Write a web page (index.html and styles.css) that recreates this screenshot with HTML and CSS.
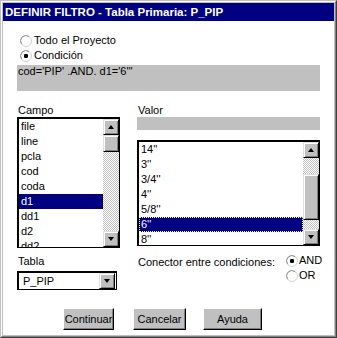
FILE: index.html
```html
<!DOCTYPE html>
<html>
<head>
<meta charset="utf-8">
<link rel="stylesheet" href="styles.css">
</head>
<body>
<div class="window">
  <div class="frame">
    <div class="titlebar">DEFINIR FILTRO - Tabla Primaria: P_PIP</div>
    <div class="client">
      <div class="radio-row"><svg class="radio" width="12" height="12" viewBox="0 0 12 12"><circle cx="6" cy="6" r="5.5" fill="#fff" stroke="#d0d0d0"/><path d="M1.6 9 A5.3 5.3 0 0 1 9 1.6" fill="none" stroke="#909090"/></svg><span>Todo el Proyecto</span></div>
      <div class="radio-row"><svg class="radio" width="12" height="12" viewBox="0 0 12 12"><circle cx="6" cy="6" r="5.5" fill="#fff" stroke="#d0d0d0"/><path d="M1.6 9 A5.3 5.3 0 0 1 9 1.6" fill="none" stroke="#909090"/><rect x="4" y="4" width="4" height="4" rx="1.2" fill="#000"/></svg><span>Condición</span></div>
      <div class="cond-field">cod='PIP' .AND. d1='6'''</div>

      <div class="lists">
        <div class="col campo">
          <div class="label">Campo</div>
          <div class="listbox campo-list">
            <ul class="items">
              <li>file</li><li>line</li><li>pcla</li><li>cod</li><li>coda</li>
              <li class="sel">d1</li><li>dd1</li><li>d2</li><li>dd2</li>
            </ul>
            <div class="scrollbar">
              <div class="sbtn"><span class="tri-up"></span></div>
              <div class="thumb thumb-campo"></div>
              <div class="track"></div>
              <div class="sbtn"><span class="tri-down"></span></div>
            </div>
          </div>
        </div>
        <div class="col valor">
          <div class="label">Valor</div>
          <div class="valor-field"></div>
          <div class="listbox valor-list">
            <ul class="items">
              <li>14''</li><li>3''</li><li>3/4''</li><li>4''</li><li>5/8''</li>
              <li class="sel focus">6''</li><li>8''</li>
            </ul>
            <div class="scrollbar">
              <div class="sbtn"><span class="tri-up"></span></div>
              <div class="track track-top"></div>
              <div class="thumb thumb-valor"></div>
              <div class="track"></div>
              <div class="sbtn"><span class="tri-down"></span></div>
            </div>
          </div>
        </div>
      </div>

      <div class="bottom">
        <div class="tabla-col">
          <div class="label">Tabla</div>
          <div class="dropdown">
            <span class="dd-text">P_PIP</span>
            <div class="sbtn dd-btn"><span class="tri-down"></span></div>
          </div>
        </div>
        <div class="conector">Conector entre condiciones:</div>
        <div class="radios">
          <div class="radio-row small"><svg class="radio" width="12" height="12" viewBox="0 0 12 12"><circle cx="6" cy="6" r="5.5" fill="#fff" stroke="#d0d0d0"/><path d="M1.6 9 A5.3 5.3 0 0 1 9 1.6" fill="none" stroke="#909090"/><rect x="4" y="4" width="4" height="4" rx="1.2" fill="#000"/></svg><span>AND</span></div>
          <div class="radio-row small"><svg class="radio" width="12" height="12" viewBox="0 0 12 12"><circle cx="6" cy="6" r="5.5" fill="#fff" stroke="#d0d0d0"/><path d="M1.6 9 A5.3 5.3 0 0 1 9 1.6" fill="none" stroke="#909090"/></svg><span>OR</span></div>
        </div>
      </div>

      <div class="buttons">
        <div class="btn b-cont">Continuar</div>
        <div class="btn b-canc">Cancelar</div>
        <div class="btn b-ayu">Ayuda</div>
      </div>
    </div>
  </div>
</div>
</body>
</html>
```
FILE: styles.css
```css
* { box-sizing: border-box; }
html, body { margin: 0; padding: 0; background: #fff; }
body {
  font-family: "Liberation Sans", Arial, sans-serif;
  font-size: 11px;
  color: #000;
}
.window {
  width: 337px;
  height: 338px;
  border: 1px solid;
  border-color: #c0c0c0 #404040 #404040 #c0c0c0;
}
.frame {
  width: 100%;
  height: 100%;
  border: 1px solid;
  border-color: #fff #808080 #808080 #fff;
  background: #c0c0c0;
  padding: 1px;
  display: flex;
  flex-direction: column;
}
.titlebar {
  height: 18px;
  background: #000080;
  color: #fff;
  font-weight: bold;
  font-size: 11.5px;
  line-height: 18px;
  padding-left: 2px;
  white-space: nowrap;
}
.client {
  flex: 1;
  background: #fff;
  padding: 12px 0 0 14px;
}
.radio-row {
  height: 15px;
  display: flex;
  align-items: center;
  line-height: 15px;
}
.radio { margin-left: 3px; margin-right: 2px; flex: none; }
.cond-field {
  margin-top: 2px;
  width: 303px;
  height: 26px;
  background: #c0c0c0;
  line-height: 13px;
  padding-left: 1px;
}
.lists {
  margin-top: 13px;
  display: flex;
  gap: 17px;
  align-items: flex-start;
}
.label { line-height: 13px; height: 13px; padding-left: 1px; }
.campo { width: 103px; }
.valor { width: 183px; }
.listbox {
  display: flex;
  border-style: solid;
  border-width: 2px 1px 1px 2px;
  border-color: #000;
  background: #fff;
}
.campo-list { height: 131px; }
.valor-field {
  height: 13px;
  background: #c0c0c0;
  margin-bottom: 10px;
}
.valor-list { height: 106px; }
.items {
  list-style: none;
  margin: 0;
  padding: 0;
  flex: 1;
  overflow: hidden;
}
.items li {
  height: 15px;
  line-height: 15px;
  padding-left: 2px;
  white-space: nowrap;
}
.items li.sel { background: #000080; color: #fff; }
.items li.focus { outline: 1px dotted #fff; outline-offset: -1px; }
.scrollbar {
  width: 16px;
  flex: none;
  display: flex;
  flex-direction: column;
}
.sbtn {
  width: 16px;
  height: 16px;
  flex: none;
  background: #c0c0c0;
  border: 1px solid;
  border-color: #dfdfdf #000 #000 #dfdfdf;
  box-shadow: inset 1px 1px #fff, inset -1px -1px #808080;
  display: flex;
  align-items: center;
  justify-content: center;
}
.tri-up, .tri-down {
  width: 0; height: 0;
  border-left: 3.5px solid transparent;
  border-right: 3.5px solid transparent;
}
.tri-up { border-bottom: 4px solid #000; }
.tri-down { border-top: 4px solid #000; }
.thumb {
  flex: none;
  background: #c0c0c0;
  border: 1px solid;
  border-color: #dfdfdf #000 #000 #dfdfdf;
  box-shadow: inset 1px 1px #fff, inset -1px -1px #808080;
}
.thumb-campo { height: 17px; }
.thumb-valor { height: 46px; }
.track {
  flex: 1;
  background: repeating-conic-gradient(#c0c0c0 0 25%, #fff 0 50%) 0 0 / 2px 2px;
}
.track-top { flex: none; height: 16px; }
.bottom {
  margin-top: 7px;
  display: flex;
  align-items: flex-start;
}
.tabla-col { width: 103px; }
.dropdown {
  margin-top: 3px;
  width: 100px;
  height: 19px;
  border-style: solid;
  border-width: 2px 1px 1px 2px;
  border-color: #000;
  display: flex;
  align-items: center;
  justify-content: space-between;
  padding-left: 4px;
}
.dd-text { line-height: 15px; }
.dd-btn { margin-right: 1px; }
.conector {
  margin-left: 18px;
  width: 148px;
  line-height: 13px;
  padding-top: 1px;
}
.radios { margin-top: -2px; margin-left: -3px; }
.radios .radio { margin-right: 1px; }
.buttons {
  margin-top: 18px;
  margin-left: 46px;
  display: flex;
}
.btn {
  height: 22px;
  background: #c0c0c0;
  border: 1px solid;
  border-color: #fff #000 #000 #fff;
  box-shadow: inset -1px -1px #808080;
  line-height: 20px;
  text-align: center;
  white-space: nowrap;
}
.b-cont { width: 51px; }
.b-canc { width: 53px; margin-left: 19px; }
.b-ayu { width: 59px; margin-left: 17px; }
```
